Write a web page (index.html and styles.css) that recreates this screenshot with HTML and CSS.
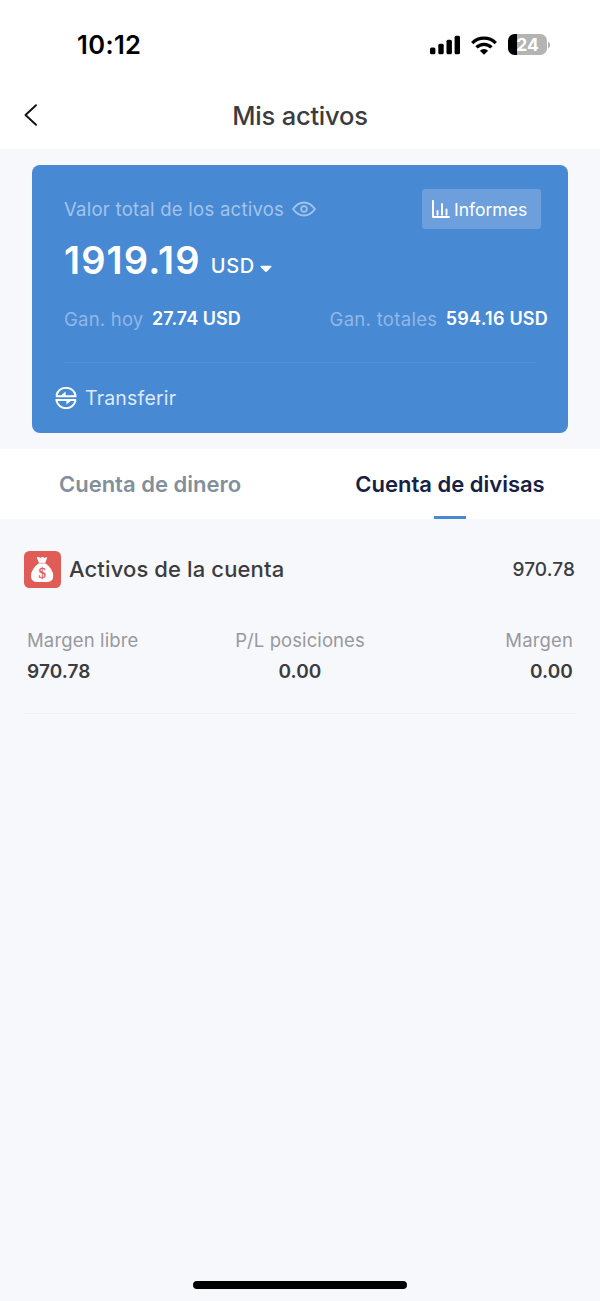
FILE: index.html
```html
<!DOCTYPE html>
<html lang="es">
<head>
<meta charset="utf-8">
<title>Mis activos</title>
<link rel="stylesheet" href="styles.css">
</head>
<body>
<div class="screen">
  <header class="top">
    <div class="status">
      <span class="time">10:12</span>
      <div class="status-icons">
        <svg class="signal" width="30" height="20" viewBox="0 0 30 20"><rect x="0" y="12.500" width="5.4" height="6.8" rx="1.5"/><rect x="8.300" y="8.800" width="5.4" height="10.500" rx="1.5"/><rect x="16.500" y="4.700" width="5.4" height="14.600" rx="1.5"/><rect x="24.600" y=".7" width="5.4" height="18.600" rx="1.5"/></svg>
        <svg class="wifi" width="26" height="20" viewBox="0 0 26 20"><g fill="none" stroke="#000" stroke-width="3.300"><path d="M1.200 8.100A16.700 16.700 0 0 1 24.800 8.100"/><path d="M5.500 12.400A10.600 10.600 0 0 1 20.500 12.400"/></g><path d="M13 19.800L8.900 15.700A5.800 5.800 0 0 1 17.100 15.700Z"/></svg>
        <div class="battery"><span class="level">24</span><svg class="nub" width="3" height="8" viewBox="0 0 3 8"><path d="M0 .5Q2.200 1.500 2.200 4T0 7.500Z"/></svg></div>
      </div>
    </div>
    <div class="nav">
      <svg class="back" width="14" height="24" viewBox="0 0 14 24"><path d="M12 2.200L1.500 12L12 21.800"/></svg>
      <h1 class="title">Mis activos</h1>
    </div>
  </header>

  <section class="card">
    <div class="card-head">
      <div class="total-label"><span class="label-text">Valor total de los activos</span>
        <svg class="eye" width="24" height="16" viewBox="0 0 24 16"><path d="M1.100 8Q5.700 1.500 12 1.500T22.900 8Q18.300 14.500 12 14.500T1.100 8Z"/><circle cx="12" cy="8" r="2.800"/></svg>
      </div>
      <div class="reports"><svg class="chart" width="18" height="18" viewBox="0 0 18 18"><path d="M1 .8V17H17M5.500 11V14.800M10 4V14.800M14.500 9.500V14.800"/></svg><span class="reports-text">Informes</span></div>
    </div>
    <div class="total"><span class="amount">1919.19</span><span class="currency">USD</span><svg class="caret" width="12" height="8" viewBox="0 0 12 8"><path d="M1 .8H11Q12 1 11.300 1.900L7 6.500Q6 7.400 5 6.500L.7 1.900Q0 1 1 .8Z"/></svg></div>
    <div class="gains">
      <div class="gain"><span class="gain-label">Gan. hoy</span><span class="gain-value">27.74 USD</span></div>
      <div class="gain overall"><span class="gain-label">Gan. totales</span><span class="gain-value">594.16 USD</span></div>
    </div>
    <div class="transfer">
      <svg class="swap" width="22" height="22" viewBox="0 0 22 22"><path d="M1.500 8.200A9.800 9.800 0 0 1 20.500 8.200M20.500 13.800A9.800 9.800 0 0 1 1.500 13.800M.8 9.300H21.500M.5 12.900H21.200"/><path class="tip" d="M5 9.300L10.600 4.600V9.300ZM17 12.900L11.400 17.600V12.900Z"/></svg>
      <span class="transfer-text">Transferir</span>
    </div>
  </section>

  <nav class="tabs">
    <div class="tab"><span class="tab-text">Cuenta de dinero</span></div>
    <div class="tab active"><span class="tab-text">Cuenta de divisas</span></div>
  </nav>

  <main class="account">
    <div class="account-head">
      <svg class="bag" width="37" height="37" viewBox="0 0 37 37"><rect width="37" height="37" rx="5.500" fill="#e05c56"/><path fill="#fff" d="M12.700 6.300Q14.500 5.800 15.500 6.500Q16.500 7.200 17.500 6.200Q18.300 5.500 19.200 6.300Q20.200 7 21.500 6.400Q23 6 23.200 6.500L21.200 12Q29.200 18 29.200 25Q29.200 31 22.500 31H13.500Q7 31 7 25Q7 18 15 12Z"/><path d="M14.500 12.300H21.700" stroke="#e05c56" stroke-width=".5"/><text class="coin" x="18.300" y="26.500">$</text></svg>
      <h2 class="account-title">Activos de la cuenta</h2>
      <span class="account-value">970.78</span>
    </div>
    <div class="stats">
      <div class="stat"><span class="stat-label">Margen libre</span><span class="stat-value">970.78</span></div>
      <div class="stat middle"><span class="stat-label">P/L posiciones</span><span class="stat-value">0.00</span></div>
      <div class="stat right"><span class="stat-label">Margen</span><span class="stat-value">0.00</span></div>
    </div>
  </main>
  <div class="home-bar"></div>
</div>
</body>
</html>
```
FILE: styles.css
```css
* { box-sizing: border-box; }
body { margin: 0; font-family: Inter, sans-serif; background: #f6f8fc; }
svg { display: block; flex: none; }
h1, h2 { margin: 0; }
.screen { width: 600px; height: 1301px; display: flex; flex-direction: column; white-space: nowrap; }
.top { background: #fff; height: 149px; padding-top: 24px; }
.status { height: 40px; display: flex; align-items: center; justify-content: space-between; padding: 0 49px 0 77px; }
.time { font-size: 25.500px; font-weight: 600; color: #000; letter-spacing: 0.4px; }
.status-icons { display: flex; align-items: center; padding-top: 1px; }
.wifi { margin: 0 11px 0 11px; }
.battery { display: flex; align-items: center; }
.level { width: 39px; height: 21px; border-radius: 6.500px; background: linear-gradient(90deg, #000 9px, #b4b4b4 9px); color: #fff; font-size: 17.500px; font-weight: 700; line-height: 21px; text-align: center; }
.nub { margin-left: 1px; fill: #b4b4b4; }
.nav { height: 50px; margin-top: 26px; display: grid; grid-template-columns: 1fr auto 1fr; align-items: center; padding: 0 24px; }
.back { fill: none; stroke: #111; stroke-width: 1.900; stroke-linecap: round; stroke-linejoin: round; }
.title { font-size: 25.500px; font-weight: 500; color: #3c3c3e; letter-spacing: -0.220px; }
.card { margin: 16px 32px 0; height: 268px; border-radius: 8px; background: #4889d4; color: #fff; padding: 24px 20px 0 32px; }
.card-head { display: flex; align-items: center; justify-content: space-between; height: 40px; padding-right: 7px; }
.total-label { display: flex; align-items: center; color: #a3c4ea; font-size: 18.500px; letter-spacing: .26px; }
.eye { margin-left: 8px; fill: none; stroke: #a3c4ea; stroke-width: 1.800; }
.reports { width: 119px; height: 40px; border-radius: 3px; background: #6d9fdc; display: flex; align-items: center; padding-left: 10px; font-size: 17.500px; letter-spacing: 0; }
.chart { margin-right: 4px; fill: none; stroke: #fff; stroke-width: 1.900; stroke-linecap: round; stroke-linejoin: round; }
.total { height: 62px; display: flex; align-items: center; }
.amount { font-size: 38px; font-weight: 600; letter-spacing: 1.120px; }
.currency { font-size: 20px; font-weight: 500; letter-spacing: .7px; margin: 11px 5px 0 10px; }
.caret { fill: #fff; margin-top: 17px; }
.gains { display: flex; justify-content: space-between; align-items: center; height: 55px; }
.gain { display: flex; align-items: center; font-size: 18px; }
.gain-label { color: #91b8e6; font-size: 18.500px; letter-spacing: .22px; margin-right: 8.500px; line-height: 20px; }
.gain-value { font-weight: 600; letter-spacing: .05px; }
.overall .gain-label { letter-spacing: .3px; }
.overall .gain-value { letter-spacing: .22px; }
.transfer { border-top: 1px solid #5490d7; margin-right: 12px; margin-top: 16px; height: 71px; display: flex; align-items: center; font-size: 19.500px; color: #dfe9f7; letter-spacing: .2px; }
.swap { margin: 0 8px 0 -9px; fill: none; stroke: #fff; stroke-width: 2; }
.tip { fill: #fff; stroke: none; }
.tabs { margin-top: 16px; height: 70px; background: #fff; display: flex; }
.tab { flex: 1; display: flex; flex-direction: column; align-items: center; font-size: 22px; line-height: 70px; font-weight: 600; color: #82909c; }
.active { color: #172143; }
.active::after { content: ""; width: 32px; height: 3px; margin-top: -3px; background: #4889d4; flex: none; }
.account { margin: 32px 24px 0; height: 163px; border-bottom: 1px solid #eff1f5; margin-bottom: 1px; }
.account-head { display: flex; align-items: center; height: 37px; }
.coin { font: 400 15px "Liberation Serif", serif; fill: #e05c56; stroke: #e05c56; stroke-width: .3; text-anchor: middle; }
.account-title { font-size: 22px; line-height: 26px; font-weight: 500; color: #3c3c3e; margin: -2px 0 0 8px; flex: 1; letter-spacing: .12px; }
.account-value { font-size: 19px; font-weight: 500; color: #3c3c3e; letter-spacing: .1px; margin-right: 1px; }
.stats { display: grid; grid-template-columns: 1fr 1fr 1fr; padding: 0 3px; margin-top: 37px; }
.stat { display: flex; flex-direction: column; align-items: flex-start; line-height: 31px; }
.middle { align-items: center; }
.right { align-items: flex-end; }
.stat-label { color: #98989c; font-size: 18.500px; letter-spacing: .15px; }
.stat-value { color: #3c3c3e; font-size: 19px; font-weight: 600; letter-spacing: .1px; }
.middle .stat-label { letter-spacing: .08px; }
.home-bar { width: 214px; height: 8px; border-radius: 4px; background: #000; margin: auto auto 12px; }
```
